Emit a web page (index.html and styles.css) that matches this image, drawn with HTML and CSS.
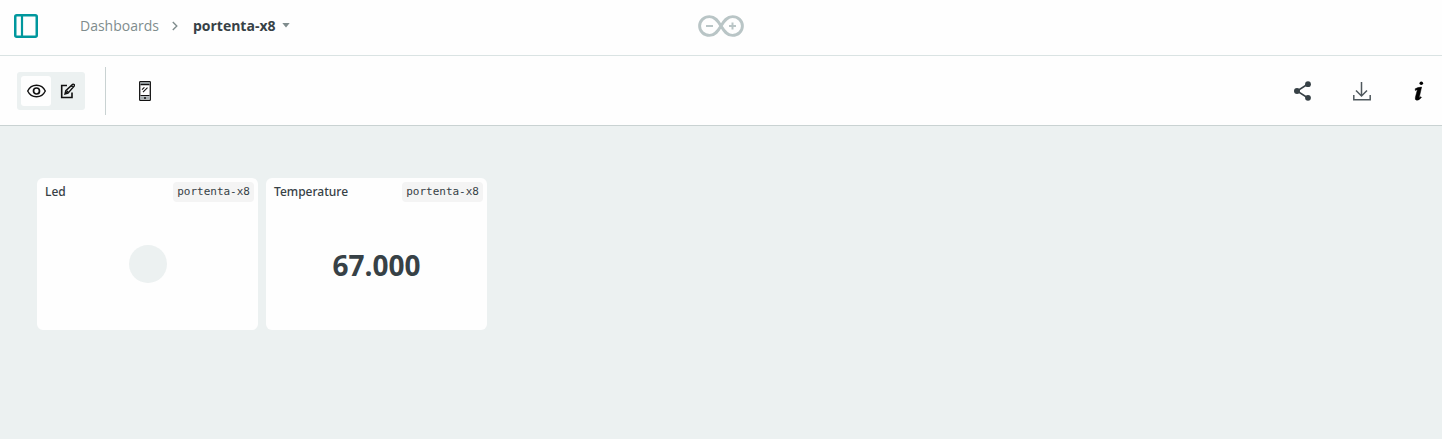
FILE: index.html
```html
<!DOCTYPE html>
<html lang="en">
<head>
<meta charset="utf-8">
<title>portenta-x8</title>
<link rel="stylesheet" href="styles.css">
</head>
<body>
<header class="topbar">
  <div class="topbar-left">
    <button class="icon-button" type="button" aria-label="Toggle sidebar">
      <svg width="24" height="24" viewBox="0 0 24 24" fill="none" stroke="#00979d"><rect x="1.25" y="1.25" width="21.5" height="21.5" rx="1.5" stroke-width="2.5"/><path d="M8 1v22" stroke-width="2.2"/></svg>
    </button>
    <nav class="breadcrumb" aria-label="Breadcrumb">
      <a class="crumb" href="#">Dashboards</a>
      <svg width="6" height="10" viewBox="0 0 6 10" fill="none" stroke="#7f8c8d" stroke-width="1.4"><path d="M.8 1l4 4-4 4"/></svg>
      <button class="crumb-current" type="button">portenta-x8
        <svg width="8" height="5" viewBox="0 0 8 5" fill="#7f8c8d"><path d="M.3 0h7.4L4 4.4z"/></svg>
      </button>
    </nav>
  </div>
  <a class="logo" href="#" aria-label="Home">
    <svg width="46" height="22" viewBox="0 0 46 22" fill="none" stroke="#b9c5c6"><path d="M23 11C20 6 17 1.6 11.500 1.600C5.800 1.600 1.600 5.800 1.600 11C1.600 16.200 5.800 20.400 11.500 20.400C17 20.400 20 16 23 11C26 6 29 1.600 34.500 1.600C40.200 1.600 44.400 5.800 44.400 11C44.400 16.200 40.200 20.400 34.500 20.400C29 20.400 26 16 23 11z" stroke-width="2.900"/><path d="M8 11h7M31 11h7M34.500 7.500v7" stroke-width="2"/></svg>
  </a>
</header>
<div class="toolbar">
  <div class="toolbar-group">
    <div class="mode-switch">
      <button class="mode mode-active" type="button" aria-label="View">
        <svg width="20" height="14" viewBox="-1 0 20 14" fill="none" stroke="#111"><path d="M.7 7C2.500 3.200 5.600 1.200 9.500 1.200S16.500 3.200 18.300 7C16.500 10.800 13.400 12.800 9.500 12.800S2.500 10.800 .7 7z" stroke-width="1.400"/><circle cx="9.500" cy="7" r="3" stroke-width="1.700"/></svg>
      </button>
      <button class="mode" type="button" aria-label="Edit">
        <svg width="16" height="16" viewBox="-1 0 16 16" fill="none" stroke="#111"><path d="M7 2.500H1.700v12H12V9.500" stroke-width="1.600"/><path d="M5 11l.8-3.300 6.800-6.300q.8-.6 1.500.1t.1 1.500L8 10.100zM11.300 2.700l1.900 1.900M5 11l3-2.900" stroke-width="1.400"/></svg>
      </button>
    </div>
    <button class="icon-button device" type="button" aria-label="Mobile layout">
      <svg width="12" height="20" viewBox="0 0 12 20" fill="none" stroke="#111"><rect x=".7" y=".7" width="10.600" height="18.600" rx=".6" fill="#fefefe" stroke-width="1.300"/><path d="M1.300 1.300h9.400v1.800H1.300z" fill="#8a9295" stroke="none"/><path d="M1.500 3.600h9M1.500 14.500h9" stroke-width="1.200"/><path d="M3 8.700l2.400-2.400M4 11.200l4.500-4.500" stroke-width="1.100"/><path d="M1.300 15.200h9.400v3.400H1.300z" fill="#a9b0b3" stroke="none"/><path d="M5 16.900h2" stroke-width="1.500"/></svg>
    </button>
  </div>
  <div class="toolbar-actions">
    <button class="icon-button" type="button" aria-label="Share">
      <svg width="18" height="20" viewBox="0 0 18 20" fill="#374146" stroke="#374146"><path d="M15 3L4 10l11 7" fill="none" stroke-width="1.500"/><g stroke="none"><circle cx="15" cy="3.200" r="2.900"/><circle cx="4" cy="10" r="3"/><circle cx="15" cy="16.800" r="2.900"/></g></svg>
    </button>
    <button class="icon-button" type="button" aria-label="Download">
      <svg width="18" height="20" viewBox="0 0 18 20" fill="none" stroke="#4f585d" stroke-width="1.500"><path d="M8.500 1v14M3 9.500L8.500 15l5.500-5.500M.8 14v4.700h16.400V14"/></svg>
    </button>
    <button class="icon-button" type="button" aria-label="Information">
      <svg width="12" height="20" viewBox="-1 0 12 20"><circle cx="7.300" cy="2.300" r="1.800"/><path d="M1.200 7.800Q3.500 6.300 7.600 6.100L5.400 15.800Q5.100 17 6.800 15.700L7.500 16.400Q5 19.300 2.900 19.200Q.7 19.100 1.400 16.300L3.300 8.900Q2.800 8.600 1.400 9.600z" stroke="#000" stroke-width=".5"/></svg>
    </button>
  </div>
</div>
<main class="board">
  <section class="card">
    <div class="card-head"><h2 class="card-title">Led</h2><span class="tag">portenta-x8</span></div>
    <div class="card-body"><div class="led"></div></div>
  </section>
  <section class="card">
    <div class="card-head"><h2 class="card-title">Temperature</h2><span class="tag">portenta-x8</span></div>
    <div class="card-body"><span class="value">67.000</span></div>
  </section>
</main>
</body>
</html>
```
FILE: styles.css
```css
* { box-sizing: border-box; }
body {
  margin: 0;
  min-height: 100vh;
  display: flex;
  flex-direction: column;
  background: #ecf1f1;
  color: #374146;
  font-family: "Open Sans", "Noto Sans", sans-serif;
}
svg { display: block; }
button {
  margin: 0;
  padding: 0;
  border: 0;
  background: none;
  font: inherit;
  color: inherit;
  cursor: pointer;
}
.topbar {
  display: grid;
  grid-template-columns: 1fr auto 1fr;
  align-items: center;
  min-height: 56px;
  padding: 0 14px 4px;
  background: #fefefe;
  border-bottom: 1px solid #dae3e3;
}
.topbar-left { display: flex; align-items: center; gap: 42px; }
.breadcrumb { display: flex; align-items: center; gap: 13px; font-size: 14px; line-height: 20px; }
.crumb { color: #7f8c8d; text-decoration: none; }
.crumb-current { display: flex; align-items: center; gap: 6px; margin-left: 2px; font-weight: 700; }
.toolbar {
  display: flex;
  align-items: center;
  justify-content: space-between;
  min-height: 70px;
  padding: 0 17px;
  background: #fefefe;
  border-bottom: 1px solid #c9d2d2;
}
.toolbar-group { display: flex; align-items: center; }
.mode-switch { display: flex; gap: 2px; padding: 4px; border-radius: 3px; background: #ecf1f1; }
.mode { display: grid; place-items: center; width: 30px; height: 30px; border-radius: 3px; }
.mode + .mode { width: 28px; }
.mode-active { background: #fefefe; }
.device { margin-left: 20px; padding: 14px 0 14px 33px; border-left: 1px solid #c9d2d2; }
.toolbar-actions { display: flex; align-items: center; gap: 42px; }
.board {
  flex: 1;
  display: grid;
  grid-template-columns: repeat(auto-fill, 221px);
  align-content: start;
  gap: 8px;
  padding: 52px 37px;
}
.card { display: flex; flex-direction: column; min-height: 152px; border-radius: 6px; background: #fefefe; }
.card-head { display: flex; align-items: center; justify-content: space-between; padding: 4px 4px 0 8px; }
.card-title { margin: 0; font-family: "Noto Sans", "Open Sans", sans-serif; font-size: 12px; line-height: 20px; font-weight: 500; }
.tag {
  padding: 0 4px;
  border-radius: 4px;
  background: #f4f4f4;
  font-family: "DejaVu Sans Mono", monospace;
  font-size: 11px;
  line-height: 20px;
}
.card-body { flex: 1; display: grid; place-items: center; padding-bottom: 4px; }
.led { width: 38px; height: 38px; border-radius: 50%; background: #ecf1f1; }
.value { padding-top: 2px; font-size: 28px; line-height: 36px; font-weight: 700; }
```
